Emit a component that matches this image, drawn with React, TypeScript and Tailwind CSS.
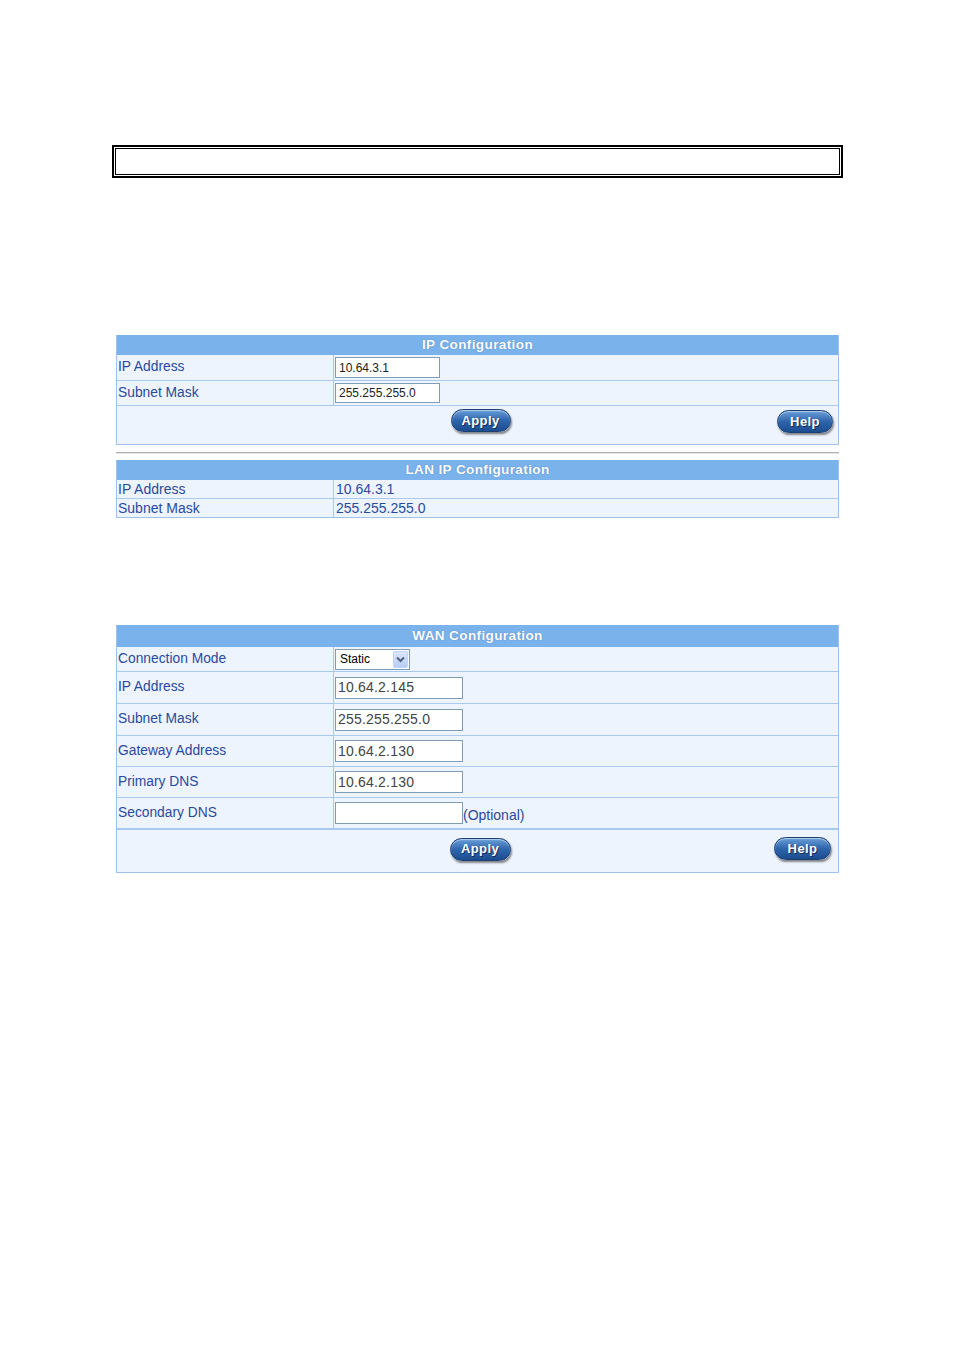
import React from "react";

const font = { fontFamily: '"Liberation Sans", Arial, sans-serif' };

function Btn({ label, w }: { label: string; w: string }) {
  return (
    <div
      className={`${w} h-[23px] rounded-full border border-[#1a3f73] bg-gradient-to-b from-[#6b9fd8] via-[#2e65ad] to-[#1c4c8e] shadow-[1px_2px_2px_rgba(0,0,0,0.45),inset_0_1px_1px_rgba(255,255,255,0.5)] flex items-center justify-center text-white font-bold text-[13px] tracking-[0.4px] [text-shadow:1px_1px_0_rgba(0,0,0,0.5)]`}
    >
      {label}
    </div>
  );
}

function Header({ title, h }: { title: string; h: string }) {
  return (
    <div
      className={`${h} bg-[#7ab2ec] flex items-center justify-center text-white font-bold text-[13.5px] tracking-[0.4px] [text-shadow:0_0_1px_rgba(40,70,130,0.6)]`}
    >
      {title}
    </div>
  );
}

export default function App() {
  const label = "text-[13.8px] text-[#2a4a9e] pl-[1px] flex items-center";
  return (
    <div className="min-h-[1351px] w-[954px] bg-white pt-[145px]" style={font}>
      {/* top box */}
      <div className="ml-[112px] w-[731px] h-[33px] border-2 border-black p-px">
        <div className="w-full h-full border border-black" />
      </div>

      {/* IP Configuration */}
      <div className="ml-[116px] w-[723px] mt-[157px] border-x border-b border-[#9ec2ea]">
        <Header title="IP Configuration" h="h-[20px]" />
        <div className="grid grid-cols-[217px_1fr] bg-[#eef4fd]">
          <div className={`${label} h-[26px] border-b border-[#a8c8ec] border-r`}>IP Address</div>
          <div className="h-[26px] border-b border-[#a8c8ec] flex items-center pl-[1px]">
            <div className="w-[105px] h-[21px] bg-white border border-[#7f9db9] text-[12px] text-[#222] flex items-center pl-[3px]">
              10.64.3.1
            </div>
          </div>
          <div className={`${label} h-[25px] border-b border-[#a8c8ec] border-r`}>Subnet Mask</div>
          <div className="h-[25px] border-b border-[#a8c8ec] flex items-center pl-[1px]">
            <div className="w-[105px] h-[20px] bg-white border border-[#7f9db9] text-[12px] text-[#222] flex items-center pl-[3px]">
              255.255.255.0
            </div>
          </div>
        </div>
        <div className="h-[38px] bg-[#eef4fd] relative flex items-center justify-center">
          <div className="ml-[6px] mb-[9px]">
            <Btn label="Apply" w="w-[60px]" />
          </div>
          <div className="absolute right-[5px] top-[4px]">
            <Btn label="Help" w="w-[56px]" />
          </div>
        </div>
      </div>

      {/* separator */}
      <div className="ml-[116px] w-[723px] mt-[7px] h-[2px] bg-[#b0b0b0] border-b border-[#e6e6e6]" />

      {/* LAN IP Configuration */}
      <div className="ml-[116px] w-[723px] mt-[6px] border-x border-b border-[#9ec2ea]">
        <Header title="LAN IP Configuration" h="h-[20px]" />
        <div className="grid grid-cols-[217px_1fr] bg-[#eef4fd] text-[14px] text-[#2a4a9e]">
          <div className="h-[19px] border-b border-r border-[#a8c8ec] pl-[1px] flex items-center">IP Address</div>
          <div className="h-[19px] border-b border-[#a8c8ec] pl-[2px] flex items-center">10.64.3.1</div>
          <div className="h-[18px] border-r border-[#a8c8ec] pl-[1px] flex items-center">Subnet Mask</div>
          <div className="h-[18px] pl-[2px] flex items-center">255.255.255.0</div>
        </div>
      </div>

      {/* WAN Configuration */}
      <div className="ml-[116px] w-[723px] mt-[107px] border-x border-b border-[#9ec2ea]">
        <Header title="WAN Configuration" h="h-[22px]" />
        <div className="grid grid-cols-[217px_1fr] bg-[#eef4fd]">
          <div className={`${label} h-[25px] border-b border-r border-[#a8c8ec]`}>Connection Mode</div>
          <div className="h-[25px] border-b border-[#a8c8ec] flex items-center pl-[1px]">
            <div className="w-[75px] h-[21px] bg-white border border-[#7f9db9] flex items-center justify-between">
              <span className="text-[12px] text-black pl-[4px]">Static</span>
              <div className="w-[15px] h-[17px] mr-[1px] bg-gradient-to-b from-[#dbe7fb] to-[#b7cdf3] border border-[#c3d3fd] rounded-[2px] flex items-center justify-center">
                <svg width="9" height="7" viewBox="0 0 9 7">
                  <path d="M1 1.5 L4.5 5 L8 1.5" fill="none" stroke="#4d6185" strokeWidth="2" />
                </svg>
              </div>
            </div>
          </div>
          {[
            ["IP Address", "10.64.2.145", "h-[32px]"],
            ["Subnet Mask", "255.255.255.0", "h-[32px]"],
            ["Gateway Address", "10.64.2.130", "h-[31px]"],
            ["Primary DNS", "10.64.2.130", "h-[31px]"],
          ].map(([l, v, h]) => (
            <React.Fragment key={l}>
              <div className={`${label} ${h} border-b border-r border-[#a8c8ec]`}>{l}</div>
              <div className={`${h} border-b border-[#a8c8ec] flex items-center pl-[1px]`}>
                <div className="w-[128px] h-[22px] bg-white border border-[#7f9db9] text-[14px] tracking-[0.2px] text-[#444] flex items-center pl-[2px]">
                  {v}
                </div>
              </div>
            </React.Fragment>
          ))}
          <div className={`${label} h-[32px] border-b-2 border-r border-[#a8c8ec]`}>Secondary DNS</div>
          <div className="h-[32px] border-b-2 border-[#a8c8ec] flex items-center pl-[1px]">
            <div className="w-[128px] h-[22px] bg-white border border-[#7f9db9] mb-[1px]" />
            <span className="text-[14px] text-[#2a4a9e] mt-[5px]">(Optional)</span>
          </div>
        </div>
        <div className="h-[42px] bg-[#eef4fd] relative flex items-center justify-center">
          <div className="ml-[5px] mb-[4px]">
            <Btn label="Apply" w="w-[61px]" />
          </div>
          <div className="absolute right-[7px] top-[7px]">
            <Btn label="Help" w="w-[57px]" />
          </div>
        </div>
      </div>
    </div>
  );
}
